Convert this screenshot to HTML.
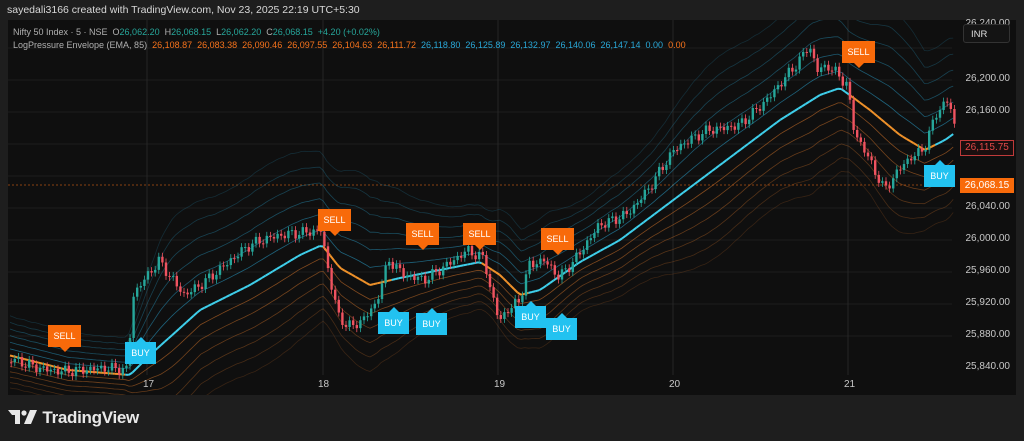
<!DOCTYPE html>
<html><head><meta charset="utf-8"><style>
html,body{margin:0;padding:0;background:#1e1e1e;width:1024px;height:441px;overflow:hidden;font-family:"Liberation Sans",sans-serif}
#hdr{position:absolute;left:7px;top:4px;color:#d8d8d8;font-size:10.5px}
#chart{position:absolute;left:8px;top:20px;width:1008px;height:375px;background:#0f0f0f}
.l1,.l2{position:absolute;left:5px;font-size:9px;color:#b0b0b0;white-space:nowrap}
.l1{top:7px}.l2{top:20px}
.g{color:#26a69a}.o{color:#f7731c}.b{color:#2aa8d8}
.ax{position:absolute;right:6px;font-size:10px;color:#c8c8c8;text-align:right}
.tl{position:absolute;top:359px;font-size:10px;color:#c8c8c8}
.tag{position:absolute;font-size:9px;color:#fff;text-align:center;line-height:22px;height:22px}
.sell{background:#f86a0a}.buy{background:#22c2f0}
.sell:after{content:"";position:absolute;left:50%;bottom:-5px;margin-left:-5px;border:5px solid transparent;border-bottom:0;border-top-color:#f86a0a}
.buy:before{content:"";position:absolute;left:50%;top:-5px;margin-left:-6px;border:6px solid transparent;border-top:0;border-bottom-color:#22c2f0}
#logo{position:absolute;left:8px;top:408px;color:#e8e8e8;font-size:17px;font-weight:bold;letter-spacing:-0.3px}
</style></head><body>
<div id="hdr">sayedali3166 created with TradingView.com, Nov 23, 2025 22:19 UTC+5:30</div>
<div id="chart">
<svg id="sv" width="1008" height="375" style="position:absolute;left:0;top:0"></svg>
<div class="l1">Nifty 50 Index · 5 · NSE &nbsp;O<span class="g">26,062.20</span> &nbsp;H<span class="g">26,068.15</span> &nbsp;L<span class="g">26,062.20</span> &nbsp;C<span class="g">26,068.15</span> &nbsp;<span class="g">+4.20 (+0.02%)</span></div>
<div class="l2">LogPressure Envelope (EMA, 85) &nbsp;<span class="o">26,108.87 &nbsp;26,083.38 &nbsp;26,090.46 &nbsp;26,097.55 &nbsp;26,104.63 &nbsp;26,111.72</span> &nbsp;<span class="b">26,118.80 &nbsp;26,125.89 &nbsp;26,132.97 &nbsp;26,140.06 &nbsp;26,147.14 &nbsp;0.00</span> &nbsp;<span class="o">0.00</span></div>
<div class="ax" style="top:-2px">26,240.00</div>
<div style="position:absolute;left:955px;top:4px;width:47px;height:19px;border:1px solid #333;border-radius:3px;background:#141414;color:#ddd;font-size:9.5px;line-height:19px;padding-left:7px;box-sizing:border-box">INR</div>
<div class="ax" style="top:53px">26,200.00</div>
<div class="ax" style="top:85px">26,160.00</div>
<div class="ax" style="top:181px">26,040.00</div>
<div class="ax" style="top:213px">26,000.00</div>
<div class="ax" style="top:245px">25,960.00</div>
<div class="ax" style="top:277px">25,920.00</div>
<div class="ax" style="top:309px">25,880.00</div>
<div class="ax" style="top:341px">25,840.00</div>
<div style="position:absolute;left:952px;top:120px;width:52px;height:14px;border:1px solid #c03a3a;color:#e04848;font-size:10px;line-height:14px;text-align:center;background:#1a0f0f">26,115.75</div>
<div style="position:absolute;left:952px;top:158px;width:54px;height:15px;background:#f86a0a;color:#fff;font-size:10px;line-height:15px;text-align:center">26,068.15</div>
<div class="tl" style="left:135px">17</div>
<div class="tl" style="left:310px">18</div>
<div class="tl" style="left:486px">19</div>
<div class="tl" style="left:661px">20</div>
<div class="tl" style="left:836px">21</div>
<div class="tag sell" style="left:40px;top:305px;width:33px">SELL</div>
<div class="tag buy" style="left:117px;top:322px;width:31px">BUY</div>
<div class="tag sell" style="left:310px;top:189px;width:33px">SELL</div>
<div class="tag sell" style="left:398px;top:203px;width:33px">SELL</div>
<div class="tag sell" style="left:455px;top:203px;width:33px">SELL</div>
<div class="tag sell" style="left:533px;top:208px;width:33px">SELL</div>
<div class="tag sell" style="left:834px;top:21px;width:33px">SELL</div>
<div class="tag buy" style="left:370px;top:292px;width:31px">BUY</div>
<div class="tag buy" style="left:408px;top:293px;width:31px">BUY</div>
<div class="tag buy" style="left:507px;top:286px;width:31px">BUY</div>
<div class="tag buy" style="left:538px;top:298px;width:31px">BUY</div>
<div class="tag buy" style="left:916px;top:145px;width:31px">BUY</div>
</div>
<div id="logo"><svg width="30" height="14" viewBox="0 0 30 14" style="vertical-align:-1px"><path d="M0 0h12v14h-5v-9h-7z M0 0v5h4z" fill="#e8e8e8"/><circle cx="16" cy="3" r="2.6" fill="#e8e8e8"/><path d="M22 0h7l-6 14h-7z" fill="#e8e8e8"/></svg> TradingView</div>
<script>
var s=document.getElementById('sv'),h='';
[28,60,92,124,156,188,220,252,284,316].forEach(function(y){h+='<line x1="0" x2="944" y1="'+y+'" y2="'+y+'" stroke="#1c1c1c"/>'});
[139,315,490,665,840].forEach(function(x){h+='<line x1="'+x+'" x2="'+x+'" y1="0" y2="355" stroke="#262626"/>'});
h+='<line x1="0" x2="944" y1="165" y2="165" stroke="#8a4010" stroke-dasharray="2,2"/>';
var P=[[0,340],[40,345],[80,350],[118,355],[124,280],[135,262],[150,240],[175,270],[200,255],[240,230],[280,215],[312,205],[318,240],[330,295],[345,305],[365,290],[380,245],[395,260],[415,262],[440,240],[458,225],[475,235],[482,270],[490,300],[500,290],[510,285],[520,250],[535,245],[550,260],[565,240],[590,200],[620,190],[640,170],[665,135],[700,110],[730,100],[760,75],[790,45],[800,30],[808,55],[820,50],[838,65],[845,110],[860,135],[875,165],[895,140],[915,130],[928,95],[940,85],[948,125]];
var E=[[0,335],[60,350],[122,355],[142,335],[192,290],[242,265],[292,235],[314,225],[332,248],[362,265],[392,258],[432,250],[472,242],[492,255],[512,275],[532,270],[572,242],[612,220],[652,190],[692,160],[732,130],[772,100],[812,75],[832,68],[862,90],[892,115],[917,130],[937,120],[948,112]];
function ip(A,x){for(var i=1;i<A.length;i++){if(x<=A[i][0]){var a=A[i-1],b=A[i],t=(x-a[0])/(b[0]-a[0]);return a[1]+t*(b[1]-a[1])}}return A[A.length-1][1]}
var xs=[],cl=[],e=[],vol=[],v=6;
for(var x=2;x<948;x+=3.6){var c=ip(P,x)+Math.sin(x*1.7)*5+Math.sin(x*0.53)*4+Math.sin(x*3.1)*2;xs.push(x);cl.push(c);var ev=ip(E,x);e.push(ev);var d=Math.abs(c-ev);v+=(d*0.35+4-v)*0.05;vol.push(v)}
function line(k,sgn,col,w){var d='';for(var i=0;i<xs.length;i++){d+=(i?'L':'M')+xs[i].toFixed(1)+' '+(e[i]+sgn*k*vol[i]).toFixed(1)}return '<path d="'+d+'" fill="none" stroke="'+col+'" stroke-width="'+w+'"/>'}
for(var k=1;k<=6;k++){h+=line(k*1.1,-1,'rgba(40,150,190,'+(0.7-k*0.08)+')',0.8);h+=line(k*0.9,1,'rgba(200,110,40,'+(0.7-k*0.08)+')',0.8)}
function orange(x){return (x>316&&x<385)||(x>476&&x<522)||(x>842&&x<928)||(x<120)}
for(var i=1;i<xs.length;i++){var col=orange(xs[i])?'#f0922a':'#3fd0ec';h+='<line x1="'+xs[i-1]+'" y1="'+e[i-1]+'" x2="'+xs[i]+'" y2="'+e[i]+'" stroke="'+col+'" stroke-width="2"/>'}
var prev=cl[0];
for(var i=0;i<xs.length;i++){var o=prev,c=cl[i],up=c<o,col=up?'#26a69a':'#ef5360';var t=Math.min(o,c),b=Math.max(o,c);if(b-t<1)b=t+1;
h+='<line x1="'+(xs[i]+1.2)+'" x2="'+(xs[i]+1.2)+'" y1="'+(t-4)+'" y2="'+(b+4)+'" stroke="'+col+'" stroke-width="0.8"/><rect x="'+xs[i]+'" y="'+t+'" width="2.4" height="'+(b-t)+'" fill="'+col+'"/>';prev=c}
s.innerHTML=h;
</script>
</body></html>
